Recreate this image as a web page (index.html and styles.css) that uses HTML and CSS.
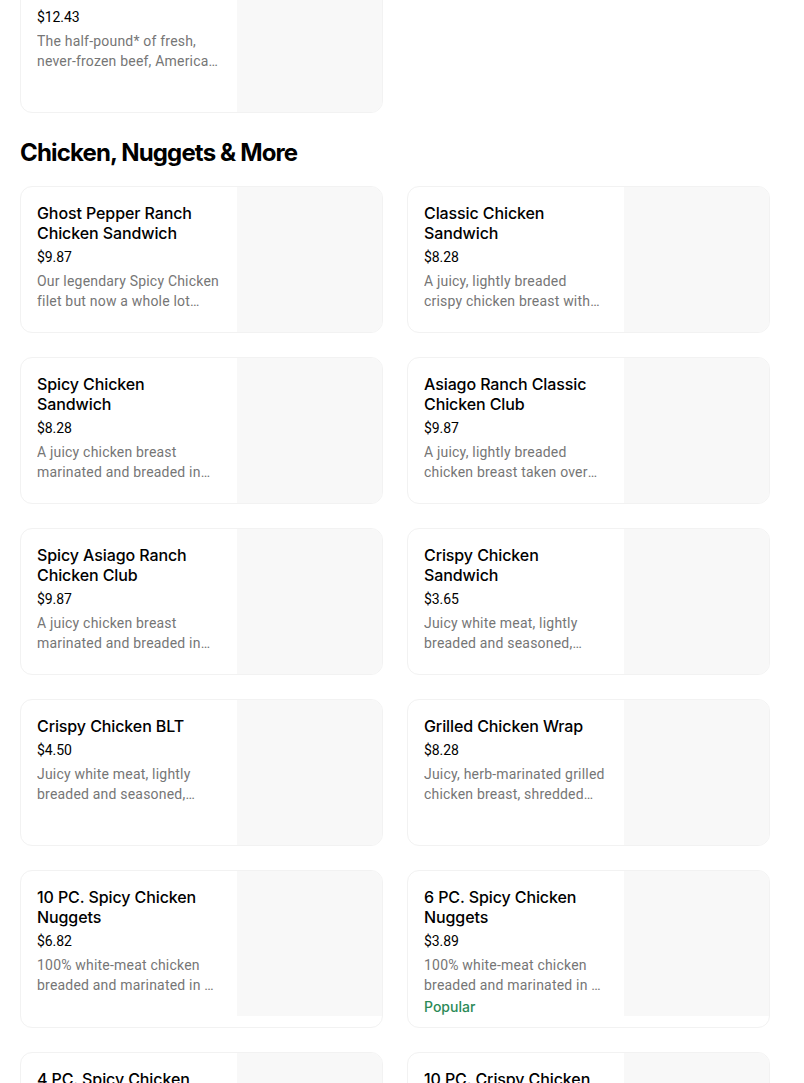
FILE: index.html
```html
<!DOCTYPE html>
<html lang="en">
<head>
<meta charset="utf-8">
<title>Chicken, Nuggets &amp; More</title>
<link rel="stylesheet" href="styles.css">
</head>
<body>
<main class="page">
  <section class="section section-prev">
    <div class="grid">
      <article class="card">
        <div class="card-text">
          <h3 class="item-title">Dave's Double</h3>
          <div class="item-price">$12.43</div>
          <p class="item-desc">The half-pound* of fresh, never-frozen beef, American cheese, crisp lettuce, tomato, pickle, ketchup, mayo and onion.</p>
        </div>
        <div class="card-img"></div>
      </article>
    </div>
  </section>

  <section class="section">
    <h2 class="section-title">Chicken, Nuggets &amp; More</h2>
    <div class="grid">
      <article class="card">
        <div class="card-text">
          <h3 class="item-title">Ghost Pepper Ranch Chicken Sandwich</h3>
          <div class="item-price">$9.87</div>
          <p class="item-desc">Our legendary Spicy Chicken filet but now a whole lot spicier, topped with ghost pepper ranch sauce.</p>
        </div>
        <div class="card-img"></div>
      </article>
      <article class="card">
        <div class="card-text">
          <h3 class="item-title">Classic Chicken Sandwich</h3>
          <div class="item-price">$8.28</div>
          <p class="item-desc">A juicy, lightly breaded crispy chicken breast with mayo, lettuce, and tomato.</p>
        </div>
        <div class="card-img"></div>
      </article>
      <article class="card">
        <div class="card-text">
          <h3 class="item-title">Spicy Chicken Sandwich</h3>
          <div class="item-price">$8.28</div>
          <p class="item-desc">A juicy chicken breast marinated and breaded in our unique, fiery blend of peppers and spices.</p>
        </div>
        <div class="card-img"></div>
      </article>
      <article class="card">
        <div class="card-text">
          <h3 class="item-title">Asiago Ranch Classic Chicken Club</h3>
          <div class="item-price">$9.87</div>
          <p class="item-desc">A juicy, lightly breaded chicken breast taken over the top with Applewood smoked bacon.</p>
        </div>
        <div class="card-img"></div>
      </article>
      <article class="card">
        <div class="card-text">
          <h3 class="item-title">Spicy Asiago Ranch Chicken Club</h3>
          <div class="item-price">$9.87</div>
          <p class="item-desc">A juicy chicken breast marinated and breaded in our unique, fiery blend of peppers and spices.</p>
        </div>
        <div class="card-img"></div>
      </article>
      <article class="card">
        <div class="card-text">
          <h3 class="item-title">Crispy Chicken Sandwich</h3>
          <div class="item-price">$3.65</div>
          <p class="item-desc">Juicy white meat, lightly breaded and seasoned, topped with mayo and lettuce.</p>
        </div>
        <div class="card-img"></div>
      </article>
      <article class="card">
        <div class="card-text">
          <h3 class="item-title">Crispy Chicken BLT</h3>
          <div class="item-price">$4.50</div>
          <p class="item-desc">Juicy white meat, lightly breaded and seasoned, topped with Applewood smoked bacon.</p>
        </div>
        <div class="card-img"></div>
      </article>
      <article class="card">
        <div class="card-text">
          <h3 class="item-title">Grilled Chicken Wrap</h3>
          <div class="item-price">$8.28</div>
          <p class="item-desc">Juicy, herb-marinated grilled chicken breast, shredded cheese, and lettuce.</p>
        </div>
        <div class="card-img"></div>
      </article>
      <article class="card">
        <div class="card-text">
          <h3 class="item-title">10 PC. Spicy Chicken Nuggets</h3>
          <div class="item-price">$6.82</div>
          <p class="item-desc">100% white-meat chicken breaded and marinated in a spicy seasoning.</p>
        </div>
        <div class="card-img"></div>
      </article>
      <article class="card">
        <div class="card-text">
          <h3 class="item-title">6 PC. Spicy Chicken Nuggets</h3>
          <div class="item-price">$3.89</div>
          <p class="item-desc">100% white-meat chicken breaded and marinated in a spicy seasoning.</p>
          <div class="item-tag">Popular</div>
        </div>
        <div class="card-img"></div>
      </article>
      <article class="card">
        <div class="card-text">
          <h3 class="item-title">4 PC. Spicy Chicken Nuggets</h3>
          <div class="item-price">$2.75</div>
          <p class="item-desc">100% white-meat chicken breaded and marinated in a spicy seasoning.</p>
        </div>
        <div class="card-img"></div>
      </article>
      <article class="card">
        <div class="card-text">
          <h3 class="item-title">10 PC. Crispy Chicken Nuggets</h3>
          <div class="item-price">$5.45</div>
          <p class="item-desc">100% white-meat chicken, lightly breaded and seasoned.</p>
        </div>
        <div class="card-img"></div>
      </article>
    </div>
  </section>
</main>
</body>
</html>
```

FILE: styles.css
```css
* { box-sizing: border-box; }

html, body {
  margin: 0;
  padding: 0;
  background: #ffffff;
}

body {
  font-family: "Inter", "Roboto", sans-serif;
  color: #000000;
  overflow: hidden;
}

.page {
  width: 770px;
  padding-left: 20px;
  margin-top: -34px;
}

.section-title {
  margin: 24px 0 17px;
  font-size: 24px;
  line-height: 32px;
  font-weight: 700;
  letter-spacing: -0.85px;
}

.grid {
  display: grid;
  grid-template-columns: 363px 363px;
  column-gap: 24px;
  row-gap: 24px;
  align-items: stretch;
}

.section-prev .grid {
  grid-template-columns: 363px;
}

.card {
  display: flex;
  align-items: flex-start;
  border: 1px solid #f2f2f2;
  border-radius: 12px;
  overflow: hidden;
  background: #ffffff;
}

.card-text {
  flex: 1;
  min-width: 0;
  padding: 16px 16px 10px 16px;
}

.card-img {
  flex: 0 0 145px;
  height: 145px;
  background: #f8f8f8;
}

.item-title {
  margin: 0;
  font-size: 16px;
  line-height: 20px;
  font-weight: 500;
  letter-spacing: -0.1px;
}

.item-price {
  margin-top: 4px;
  font-family: "Roboto", sans-serif;
  font-size: 14px;
  line-height: 20px;
  letter-spacing: -0.1px;
}

.item-desc {
  margin: 4px 0 0;
  font-family: "Roboto", sans-serif;
  font-size: 14px;
  line-height: 20px;
  letter-spacing: 0.2px;
  color: #767676;
  display: -webkit-box;
  -webkit-line-clamp: 2;
  -webkit-box-orient: vertical;
  overflow: hidden;
}

.item-tag {
  margin-top: 2px;
  font-size: 14px;
  line-height: 20px;
  font-weight: 500;
  color: #2c8a57;
}
```
